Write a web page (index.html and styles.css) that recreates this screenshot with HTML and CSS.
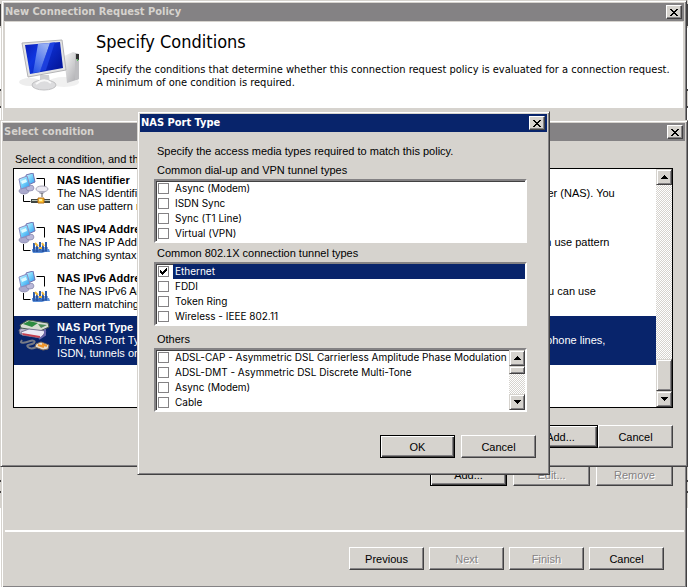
FILE: index.html
```
<!DOCTYPE html>
<html lang="en">
	<head>
		<meta charset="utf-8">
		<title>New Connection Request Policy</title>
		<link rel="stylesheet" href="styles.css">
	</head>
	<body>
		<!-- shared glyphs -->
		<svg class="defs" width="0" height="0" aria-hidden="true">
			<defs>
				<linearGradient id="glass" x1="0" y1="0" x2="1" y2="1">
					<stop offset="0" stop-color="#d8f8ff"/>
					<stop offset="0.5" stop-color="#6fd0fb"/>
					<stop offset="1" stop-color="#2f8fe8"/>
				</linearGradient>
				<linearGradient id="screen" x1="0" y1="0" x2="1" y2="0.6">
					<stop offset="0" stop-color="#0a1cb4"/>
					<stop offset="0.4" stop-color="#0f35e0"/>
					<stop offset="1" stop-color="#0418a0"/>
				</linearGradient>
				<linearGradient id="shine" x1="0" y1="1" x2="0.6" y2="0">
					<stop offset="0" stop-color="#2a5cf0"/>
					<stop offset="1" stop-color="#c4d8fa"/>
				</linearGradient>
				<linearGradient id="metal" x1="0" y1="0" x2="1" y2="1">
					<stop offset="0" stop-color="#f8f8f8"/>
					<stop offset="1" stop-color="#a4a4a8"/>
				</linearGradient>
			</defs>
			<symbol id="close" viewBox="0 0 8 7">
				<path d="M0 0h2v1h1v1h2v-1h1v-1h2v1h-1v1h-1v1h-1v1h1v1h1v1h1v1h-2v-1h-1v-1h-2v1h-1v1h-2v-1h1v-1h1v-1h1v-1h-1v-1h-1v-1h-1z"/>
			</symbol>
			<symbol id="up" viewBox="0 0 7 4">
				<path d="M3 0h1v1h1v1h1v1h1v1h-7v-1h1v-1h1v-1h1z"/>
			</symbol>
			<symbol id="down" viewBox="0 0 7 4">
				<path d="M0 0h7v1h-1v1h-1v1h-1v1h-1v-1h-1v-1h-1v-1h-1z"/>
			</symbol>
			<symbol id="computers" viewBox="0 0 32 32">
				<ellipse cx="6" cy="18" rx="5" ry="3" fill="#a9a8cc" stroke="#77779f" stroke-width="0.6"/>
				<ellipse cx="12" cy="15" rx="4" ry="3" fill="#b9b8d8" stroke="#77779f" stroke-width="0.6"/>
				<path d="M8 2l7-2 2 9-7 3z" fill="url(#glass)" stroke="#7172b0"/>
				<path d="M1 6l8-3 3 10-9 3z" fill="url(#glass)" stroke="#8a8bc0"/>
				<path d="M3 8l5-2 1 3-5 2z" fill="#dffaff"/>
				<path d="M18.500 5.500h8v10M5.500 22v6.500h7" fill="none" stroke="#000"/>
			</symbol>
			<symbol id="router" viewBox="0 0 32 32">
				<use href="#computers"/>
				<ellipse cx="24" cy="16" rx="6" ry="3" fill="#eceaf2" stroke="#aaa8b8"/>
				<path d="M20 18h8l-3 3h-3z" fill="#b0afc0"/>
				<path d="M24 20v4" stroke="#555"/>
				<path d="M13 26h19v4h-19z" fill="#3f4540"/>
				<path d="M14 27h18v1h-18z" fill="#b8c4b8"/>
				<path d="M20 25h6v5h-6z" fill="#ffc32e" stroke="#b8701a"/>
				<path d="M21 26h3v2h-3z" fill="#fff0a0"/>
			</symbol>
			<symbol id="network" viewBox="0 0 32 32">
				<use href="#computers"/>
				<path d="M14 27h17l1 3h-5l-3 1h-9l-1-2z" fill="#5b8fd8"/>
				<path d="M16 21v9M19 23v7M22 20v8M25 22v8M28 20v9" stroke="#2d5dad" stroke-width="2"/>
				<path d="M15 26h15M17 29h12" stroke="#234d9c"/>
				<path d="M17 21l3 3M24 21l2 3M21 26h3" stroke="#f0b83c" stroke-width="2"/>
			</symbol>
			<symbol id="media" viewBox="0 0 32 32">
				<path d="M1 10l8-6 17 4-6 9-18-3z" fill="#b8b4cc" stroke="#6b6880"/>
				<path d="M2 5l8-5 20 3 1 4-9 4-19-3z" fill="#d8dcd4" stroke="#445a4c"/>
				<path d="M5 4l6-3 9 2-6 4z" fill="#2d8b41"/>
				<path d="M20 4l9 1-6 3z" fill="#4b8c58"/>
				<path d="M3 12l8-3 17 2-5 7-19-3z" fill="#eceaf6" stroke="#797594"/>
				<path d="M4 13l18 3v2l-17-3z" fill="#c64050"/>
				<path d="M27 9v6l-6 4" fill="none" stroke="#6a65a8" stroke-width="2"/>
				<path d="M4 20c-4 5 5 2 8 1s6 0 4 2-9 1-6 4 6 1 9 0" fill="none" stroke="#777a86" stroke-width="2"/>
				<path d="M18 24l5-2 8 3-1 4-5 1-8-3z" fill="#e5dccf" stroke="#7d6a58"/>
				<path d="M20 25l6 2M24 24l5 2" stroke="#f09528" stroke-width="2"/>
			</symbol>
		</svg>

		<section class="window wizard">
			<div class="titlebar">
				<h2>New Connection Request Policy</h2>
				<button class="close" aria-label="Close"><svg width="8" height="7"><use href="#close"/></svg></button>
			</div>
			<header class="banner">
				<svg class="banner-icon" width="64" height="54" viewBox="0 0 64 54">
					<ellipse cx="12" cy="43" rx="11" ry="4" fill="#ededed"/>
					<ellipse cx="46" cy="43" rx="15" ry="5" fill="#f0f0f0"/>
					<path d="M46 17l9-4 6 2v25l-12 4z" fill="url(#metal)"/>
					<path d="M57 14l4 1v25l-4 1z" fill="#bdbdc0"/>
					<path d="M58 15h3v6l-3-1z" fill="#333"/>
					<path d="M59 20h1v2h-1z" fill="#4ec254"/>
					<path d="M22 36h9l1 8h-10z" fill="#cfcfd2"/>
					<ellipse cx="26" cy="46" rx="12" ry="5" fill="#dcdcde" stroke="#c0c0c2"/>
					<path d="M18 45q8-7 15-1" fill="none" stroke="#f8f8f8" stroke-width="2"/>
					<path d="M4 4l40-3 4 30-38 7z" fill="#e4e4e4" stroke="#b4b4b6"/>
					<path d="M7 6l35-3 3 26-33 6z" fill="url(#screen)"/>
					<path d="M20 5l12-1-10 29-7 1z" fill="url(#shine)" opacity="0.75"/>
					<path d="M32 4l5-1-9 28-6 1z" fill="#2448e8" opacity="0.7"/>
				</svg>
				<div>
					<h1>Specify Conditions</h1>
					<p>Specify the conditions that determine whether this connection request policy is evaluated for a connection request. <br>A minimum of one condition is required.</p>
				</div>
			</header>
			<div class="policy-actions">
				<button class="default">Add...</button>
				<button disabled>Edit...</button>
				<button disabled>Remove</button>
			</div>
			<footer class="wizard-nav">
				<button>Previous</button>
				<button disabled>Next</button>
				<button disabled>Finish</button>
				<button>Cancel</button>
			</footer>
		</section>

		<section class="window conditions">
			<div class="titlebar">
				<h2>Select condition</h2>
				<button class="close" aria-label="Close"><svg width="8" height="7"><use href="#close"/></svg></button>
			</div>
			<div class="conditions-body">
				<p class="hint">Select a condition, and then click Add.</p>
				<div class="condition-box">
					<ul class="condition-list">
						<li>
							<svg width="32" height="32"><use href="#router"/></svg>
							<div>
								<h3>NAS Identifier</h3>
								<p><span>The NAS Identifier condition specifies a character string that is the name of the</span> <span>network access server (NAS). You</span></p>
								<p>can use pattern matching syntax to specify NAS names.</p>
							</div>
						</li>
						<li>
							<svg width="32" height="32"><use href="#network"/></svg>
							<div>
								<h3>NAS IPv4 Address</h3>
								<p><span>The NAS IP Address condition specifies a character string that is the IP</span> <span>address of the NAS. You can use pattern</span></p>
								<p>matching syntax to specify IP networks.</p>
							</div>
						</li>
						<li>
							<svg width="32" height="32"><use href="#network"/></svg>
							<div>
								<h3>NAS IPv6 Address</h3>
								<p><span>The NAS IPv6 Address condition specifies a character string that is the</span> <span>IPv6 address of the NAS. You can use</span></p>
								<p>pattern matching syntax to specify IPv6 networks.</p>
							</div>
						</li>
						<li class="selected">
							<svg width="32" height="32"><use href="#media"/></svg>
							<div>
								<h3>NAS Port Type</h3>
								<p><span>The NAS Port Type condition specifies the type of media used by the</span> <span>access client, such as analog phone lines,</span></p>
								<p>ISDN, tunnels or virtual private networks, IEEE 802.11 wireless, and Ethernet switches.</p>
							</div>
						</li>
					</ul>
					<div class="scrollbar at-end">
						<button aria-label="Scroll up"><svg width="7" height="4"><use href="#up"/></svg></button>
						<div class="thumb"></div>
						<button aria-label="Scroll down"><svg width="7" height="4"><use href="#down"/></svg></button>
					</div>
				</div>
				<div class="condition-actions">
					<button class="default">Add...</button>
					<button>Cancel</button>
				</div>
			</div>
		</section>

		<section class="window active port-type">
			<div class="titlebar">
				<h2>NAS Port Type</h2>
				<button class="close" aria-label="Close"><svg width="8" height="7"><use href="#close"/></svg></button>
			</div>
			<form class="port-form">
				<p>Specify the access media types required to match this policy.</p>
				<fieldset>
					<legend>Common dial-up and VPN tunnel types</legend>
					<div class="checklist">
						<div class="rows">
							<label><input type="checkbox"><span>Async (Modem)</span></label>
							<label><input type="checkbox"><span>ISDN Sync</span></label>
							<label><input type="checkbox"><span>Sync (T1 Line)</span></label>
							<label><input type="checkbox"><span>Virtual (VPN)</span></label>
						</div>
					</div>
				</fieldset>
				<fieldset>
					<legend>Common 802.1X connection tunnel types</legend>
					<div class="checklist">
						<div class="rows">
							<label class="selected"><input type="checkbox" checked><span>Ethernet</span></label>
							<label><input type="checkbox"><span>FDDI</span></label>
							<label><input type="checkbox"><span>Token Ring</span></label>
							<label><input type="checkbox"><span>Wireless - IEEE 802.11</span></label>
						</div>
					</div>
				</fieldset>
				<fieldset class="others">
					<legend>Others</legend>
					<div class="checklist">
						<div class="rows">
							<label><input type="checkbox"><span>ADSL-CAP - Asymmetric DSL Carrierless Amplitude Phase Modulation</span></label>
							<label><input type="checkbox"><span>ADSL-DMT - Asymmetric DSL Discrete Multi-Tone</span></label>
							<label><input type="checkbox"><span>Async (Modem)</span></label>
							<label><input type="checkbox"><span>Cable</span></label>
						</div>
						<div class="scrollbar">
							<button type="button" aria-label="Scroll up"><svg width="7" height="4"><use href="#up"/></svg></button>
							<div class="thumb"></div>
							<button type="button" aria-label="Scroll down"><svg width="7" height="4"><use href="#down"/></svg></button>
						</div>
					</div>
				</fieldset>
				<div class="port-actions">
					<button type="button" class="default">OK</button>
					<button type="button">Cancel</button>
				</div>
			</form>
		</section>
	</body>
</html>
```

FILE: styles.css
```
:root {
	--face: #d6d3ce;
	--shadow: #848284;
	--dark: #424142;
	--navy: #08246b;
}

* {
	box-sizing: border-box;
}

body {
	position: relative;
	margin: 0;
	overflow: hidden;
	font-family: "Liberation Sans", Arial, sans-serif;
	font-size: 11px;
	line-height: 14px;
	color: #000;
	/* edge of the console window behind the dialogs */
	background: linear-gradient(#d6d3ce 4px, #424142 4px 26px, #d6d3ce 26px 28px, #fff 28px 89px, #424142 89px 91px, #d6d3ce 91px 106px, #424142 106px 108px, #fff 108px 120px, #d6d3ce 120px 480px, #424142 480px 482px, #d6d3ce 482px 491px, #424142 491px 493px, #d6d3ce 493px 508px, #fff 508px);
}

h1, h2, h3, p, ul {
	margin: 0;
	padding: 0;
}

.defs {
	position: absolute;
}

/* windows */
.window {
	background: var(--face);
	border: 1px solid;
	border-color: var(--face) var(--dark) var(--dark) var(--face);
	box-shadow: inset 1px 1px #fff, inset -1px -1px var(--shadow);
	padding: 2px;
}

.titlebar {
	display: flex;
	align-items: center;
	justify-content: space-between;
	height: 18px;
	padding: 0 2px 0 1px;
	background: var(--shadow);
	color: var(--face);
}

.active .titlebar {
	background: var(--navy);
	color: #fff;
}

.titlebar h2 {
	font: bold 11px/18px "DejaVu Sans Condensed", Tahoma, sans-serif;
}

/* buttons */
button {
	width: 75px;
	height: 23px;
	padding: 0;
	background: var(--face);
	border: 1px solid;
	border-color: #fff var(--dark) var(--dark) #fff;
	border-radius: 0;
	box-shadow: inset -1px -1px var(--shadow);
	color: #000;
	font: inherit;
}

button.default {
	border-color: #000;
	box-shadow: inset 1px 1px #fff, inset -1px -1px var(--dark), inset -2px -2px var(--shadow);
}

button:disabled {
	color: var(--shadow);
	text-shadow: 1px 1px #fff;
}

.close, .scrollbar button {
	display: flex;
	align-items: center;
	justify-content: center;
}

.close {
	width: 16px;
	height: 14px;
}

.close svg, .scrollbar svg {
	shape-rendering: crispEdges;
}

/* scrollbars */
.scrollbar {
	display: flex;
	flex-direction: column;
	width: 16px;
	background: repeating-conic-gradient(#fff 0 25%, var(--face) 0 50%) 0 0 / 2px 2px;
}

.scrollbar button {
	width: 16px;
	height: 16px;
}

.scrollbar button, .thumb {
	border: 1px solid;
	border-color: var(--face) var(--dark) var(--dark) var(--face);
	box-shadow: inset 1px 1px #fff, inset -1px -1px var(--shadow);
}

.thumb {
	height: 8px;
	margin-bottom: auto;
	background: var(--face);
}

.at-end .thumb {
	height: 32px;
	margin: auto 0 0;
}

/* wizard */
.wizard {
	margin: 0 1px;
}

.banner {
	display: flex;
	gap: 14px;
	height: 86px;
	margin: 1px 1px 0;
	padding: 10px 13px;
	background: #fff;
	font-family: "DejaVu Sans Condensed", Tahoma, sans-serif;
}

.banner-icon {
	flex: none;
	margin-top: 7px;
}

.banner h1 {
	font-size: 18px;
	font-weight: normal;
	line-height: 20px;
}

.banner p {
	margin-top: 11px;
	line-height: 13px;
	white-space: nowrap;
}

.policy-actions {
	display: flex;
	align-items: flex-end;
	justify-content: flex-end;
	gap: 6px;
	height: 422px;
	padding: 0 11px 44px;
}

.policy-actions button {
	width: 77px;
}

.wizard-nav {
	display: flex;
	justify-content: flex-end;
	gap: 5px;
	margin-left: 1px;
	padding: 15px 20px;
	border-top: 2px solid #fff;
}

/* select condition */
.conditions {
	position: absolute;
	top: 120px;
	left: 0;
	right: 0;
}

.conditions-body {
	padding: 11px 12px 16px 10px;
}

.hint {
	padding-left: 2px;
}

.condition-box {
	display: flex;
	height: 240px;
	margin-top: 2px;
	border: 1px solid #000;
	background: #fff;
}

.condition-list {
	flex: 1;
	list-style: none;
}

.condition-list li {
	display: flex;
	gap: 7px;
	height: 49px;
	padding: 4px;
	white-space: nowrap;
}

.condition-list h3 {
	font-size: 11px;
	line-height: 14px;
}

.condition-list p {
	line-height: 13px;
}

.condition-list span + span {
	margin-left: 5px;
}

.condition-list .selected {
	background: var(--navy);
	color: #fff;
}

.condition-actions {
	display: flex;
	justify-content: flex-end;
	margin-top: 17px;
}

/* NAS port type */
.port-type {
	position: absolute;
	top: 111px;
	left: 137px;
	width: 413px;
}

.port-form {
	padding: 12px 11px 14px 14px;
}

.port-form > p {
	padding-left: 3px;
}

fieldset {
	min-width: 0;
	margin: 5px 9px 0 0;
	padding: 0;
	border: 0;
}

fieldset + fieldset {
	margin-top: 3px;
}

fieldset.others {
	margin-top: 6px;
}

legend {
	padding: 0 0 2px 3px;
}

.checklist {
	display: flex;
	border: 2px solid;
	border-color: var(--shadow) #fff #fff var(--shadow);
	box-shadow: inset 1px 1px var(--dark);
	background: #fff;
}

.rows {
	flex: 1;
	min-width: 0;
	font-family: Inter, Arial, sans-serif;
	font-size: 10px;
}

.rows label {
	display: flex;
	align-items: center;
	gap: 4px;
	padding-left: 2px;
	line-height: 15px;
	white-space: nowrap;
}

.rows span {
	flex: 1;
	padding-left: 2px;
}

.rows .selected span {
	background: var(--navy);
	color: #fff;
}

.rows input {
	appearance: none;
	flex: none;
	width: 11px;
	height: 11px;
	margin: 0;
	border: 1px solid var(--shadow);
	background: #fff;
}

.rows input:checked {
	background: #fff url("data:image/svg+xml,%3Csvg xmlns='http://www.w3.org/2000/svg' width='9' height='9'%3E%3Cpath d='M1 3h1v1h1v1h1v-1h1v-1h1v-1h1v-1h1v3h-1v1h-1v1h-1v1h-1v1h-1v-1h-1v-1h-1z' shape-rendering='crispEdges'/%3E%3C/svg%3E") center no-repeat;
}

.port-actions {
	display: flex;
	justify-content: flex-end;
	gap: 6px;
	margin-top: 23px;
}
```
